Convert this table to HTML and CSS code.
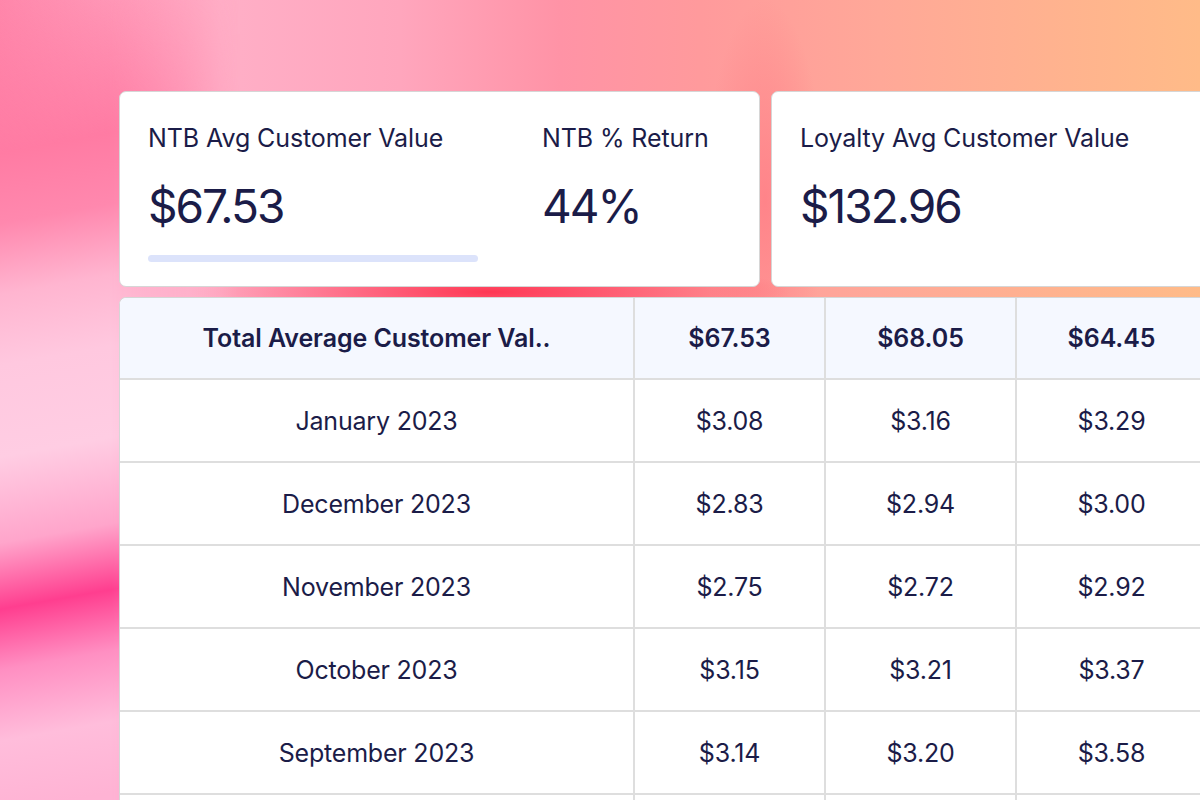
FILE: index.html
```html
<!DOCTYPE html>
<html lang="en">
<head>
<meta charset="utf-8">
<title>Customer Value</title>
<link rel="stylesheet" href="styles.css">
</head>
<body>
<div class="page">
  <div class="cards">
    <section class="card card-main">
      <div class="metric">
        <div class="label">NTB Avg Customer Value</div>
        <div class="value">$67.53</div>
        <div class="bar"></div>
      </div>
      <div class="metric">
        <div class="label">NTB % Return</div>
        <div class="value">44%</div>
      </div>
    </section>
    <section class="card card-side">
      <div class="metric">
        <div class="label">Loyalty Avg Customer Value</div>
        <div class="value">$132.96</div>
      </div>
    </section>
  </div>
  <div class="table-wrap">
    <table class="data">
      <thead>
        <tr>
          <th>Total Average Customer Val..</th>
          <th>$67.53</th>
          <th>$68.05</th>
          <th>$64.45</th>
          <th></th>
        </tr>
      </thead>
      <tbody>
        <tr><td>January 2023</td><td>$3.08</td><td>$3.16</td><td>$3.29</td><td></td></tr>
        <tr><td>December 2023</td><td>$2.83</td><td>$2.94</td><td>$3.00</td><td></td></tr>
        <tr><td>November 2023</td><td>$2.75</td><td>$2.72</td><td>$2.92</td><td></td></tr>
        <tr><td>October 2023</td><td>$3.15</td><td>$3.21</td><td>$3.37</td><td></td></tr>
        <tr><td>September 2023</td><td>$3.14</td><td>$3.20</td><td>$3.58</td><td></td></tr>
        <tr class="offscreen"><td></td><td></td><td></td><td></td><td></td></tr>
      </tbody>
    </table>
  </div>
</div>
</body>
</html>
```

FILE: styles.css
```css
html, body {
  margin: 0;
  padding: 0;
  width: 1200px;
  height: 800px;
  overflow: hidden;
}

body {
  position: relative;
  font-family: "Inter", "Noto Sans", sans-serif;
  color: #1b1c48;
  background:
    radial-gradient(ellipse 300px 34px at 490px 292px, rgba(255, 50, 78, 0.95), rgba(255, 50, 78, 0) 100%),
    radial-gradient(ellipse 60px 200px at 765px 200px, rgba(255, 120, 130, 0.7), rgba(255, 120, 130, 0) 100%),
    linear-gradient(90deg,
      #ff87ab 0px,
      #ff9cba 120px,
      #ffafc7 220px,
      #ffa6bd 400px,
      #ff93a6 560px,
      #ff9a9c 700px,
      #ffa898 880px,
      #ffb28f 1050px,
      #ffbb88 1200px);
}

/* decorative streaks along the left edge */
body::before {
  content: "";
  position: absolute;
  left: 0;
  top: 0;
  width: 260px;
  height: 800px;
  pointer-events: none;
  background: linear-gradient(170deg,
    rgba(255, 135, 171, 0) 0px,
    #ff7ba3 150px,
    #ff88ae 220px,
    #ffb5d0 290px,
    #ffc8df 360px,
    #ffcde3 450px,
    #ffa5cb 535px,
    #ff3e8f 600px,
    #ff8fc2 660px,
    #ffbddb 730px,
    #ffb3d4 800px);
  -webkit-mask-image: linear-gradient(90deg, #000 0px, #000 110px, transparent 240px);
  mask-image: linear-gradient(90deg, #000 0px, #000 110px, transparent 240px);
}

.page {
  position: relative;
  padding: 91px 0 0 119px;
}

.cards {
  display: flex;
  gap: 11px;
  width: 1200px;
}

.card {
  background: #ffffff;
  border: 1px solid #d6d6d6;
  border-radius: 7px;
  height: 196px;
  box-sizing: border-box;
  padding: 27px 0 0 28px;
}

.card-main {
  width: 641px;
  flex: none;
  display: grid;
  grid-template-columns: 330px auto;
  column-gap: 64px;
}

.card-side {
  flex: 1;
  padding-left: 28px;
}

.label {
  font-size: 25px;
  line-height: 38px;
  font-weight: 400;
  letter-spacing: -0.1px;
}

.value {
  font-size: 46px;
  line-height: 60px;
  margin-top: 19px;
  font-weight: 400;
  letter-spacing: -2px;
}

.bar {
  margin-top: 19px;
  height: 7px;
  border-radius: 4px;
  background: #dce3fb;
}

.table-wrap {
  margin-top: 10px;
  background: #ffffff;
  border: 1px solid #d6d6d6;
  border-right: none;
  border-bottom: none;
  border-radius: 7px 0 0 0;
  overflow: hidden;
  width: 1300px;
}

.data {
  border-collapse: collapse;
  table-layout: fixed;
  width: 1300px;
}

.data th,
.data td {
  border-right: 2px solid #dedede;
  border-bottom: 2px solid #dedede;
  text-align: center;
  font-size: 25px;
  letter-spacing: -0.2px;
  padding: 0;
}

.data th {
  background: #f5f8ff;
  font-weight: 600;
  height: 80px;
  letter-spacing: -0.1px;
}

.data td {
  height: 81px;
  font-weight: 400;
}

.data th:nth-child(1), .data td:nth-child(1) { width: 513px; }
.data th:nth-child(2), .data td:nth-child(2) { width: 189px; }
.data th:nth-child(3), .data td:nth-child(3) { width: 189px; }
.data th:nth-child(4), .data td:nth-child(4) { width: 189px; }
```
